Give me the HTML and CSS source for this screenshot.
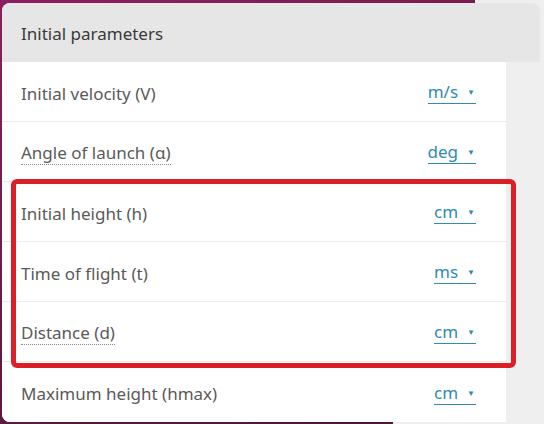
FILE: index.html
```html
<!DOCTYPE html>
<html>
<head>
<meta charset="utf-8">
<link rel="stylesheet" href="styles.css">
</head>
<body>
<div class="card">
  <div class="card-header">Initial parameters</div>
  <div class="card-body">
    <div class="row"><span class="label">Initial velocity (V)</span><span class="unit">m/s<span class="caret">▼</span></span></div>
    <div class="row"><span class="label dotted">Angle of launch (α)</span><span class="unit">deg<span class="caret">▼</span></span></div>
    <div class="row"><span class="label">Initial height (h)</span><span class="unit">cm<span class="caret">▼</span></span></div>
    <div class="row"><span class="label">Time of flight (t)</span><span class="unit">ms<span class="caret">▼</span></span></div>
    <div class="row"><span class="label dotted">Distance (d)</span><span class="unit">cm<span class="caret">▼</span></span></div>
    <div class="row last"><span class="label">Maximum height (hmax)</span><span class="unit">cm<span class="caret">▼</span></span></div>
  </div>
  <div class="highlight"></div>
</div>
</body>
</html>
```
FILE: styles.css
```css
html, body {
  margin: 0;
  padding: 0;
}
body {
  width: 544px;
  height: 424px;
  overflow: hidden;
  font-family: "Noto Sans", "Open Sans", sans-serif;
  background:
    linear-gradient(#efefef, #efefef) right top / 69px 100% no-repeat,
    linear-gradient(#efefef, #efefef) right bottom / 151px 6px no-repeat,
    linear-gradient(160deg, #8c1f5f 0%, #6a1a45 50%, #4a1530 100%);
  padding-top: 3px;
  padding-left: 2px;
  box-sizing: border-box;
}
.card {
  position: relative;
  width: 538px;
  background: #efefef;
  border-radius: 8px 8px 0 8px;
}
.card-header {
  height: 59px;
  display: flex;
  align-items: center;
  padding: 1px 0 0 19px;
  box-sizing: border-box;
  background: #e6e6e6;
  border-radius: 8px 8px 0 0;
  color: #3a3a3a;
  font-size: 17px;
}
.card-body {
  width: 504px;
  background: #fff;
  border-radius: 0 0 0 8px;
}
.row {
  height: 60px;
  display: flex;
  align-items: center;
  justify-content: space-between;
  padding: 3px 30px 0 19px;
  box-sizing: border-box;
  border-bottom: 1px solid #ececec;
  font-size: 17px;
}
.row.last {
  border-bottom: none;
}
.label {
  color: #5a5a5a;
}
.label.dotted {
  border-bottom: 1px dotted #8a8a8a;
  line-height: 21px;
  padding-bottom: 1px;
}
.unit {
  color: #2f8bb0;
  border-bottom: 1px solid #2f8bb0;
  line-height: 20px;
  padding-bottom: 1px;
}
.caret {
  font-size: 8px;
  margin-left: 9px;
  margin-right: 1px;
  vertical-align: 3px;
}
.highlight {
  position: absolute;
  left: 9px;
  top: 176px;
  width: 505px;
  height: 189px;
  box-sizing: border-box;
  border: 5px solid #dc1f26;
  border-radius: 6px;
}
```
